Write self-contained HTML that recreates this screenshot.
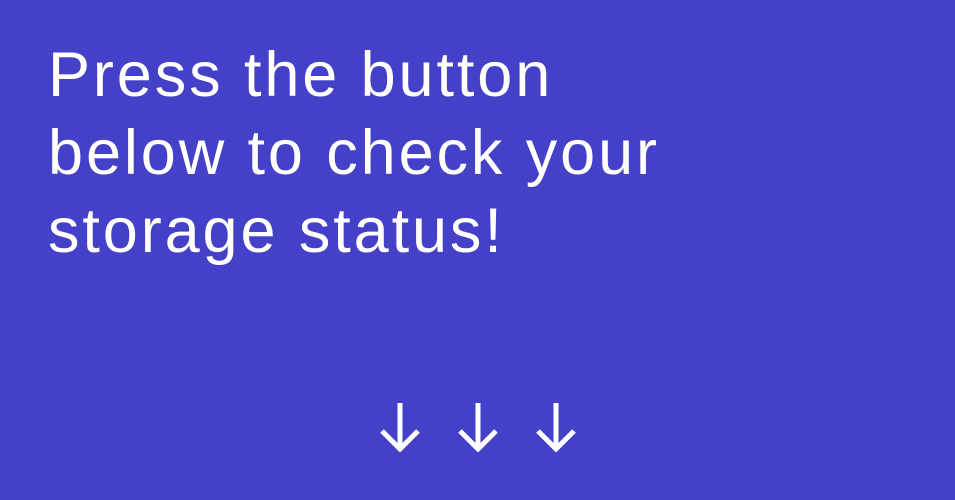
<!DOCTYPE html>
<html><head><style>
html,body{margin:0;padding:0;}
body{width:955px;height:500px;background:#4540c8;overflow:hidden;position:relative;font-family:"Liberation Sans",sans-serif;}
.t{position:absolute;left:48px;top:36px;color:#fff;font-size:63px;line-height:78px;letter-spacing:2.9px;white-space:nowrap;}
svg{position:absolute;top:400px;}
</style></head><body>
<div class="t">Press the button<br>below to check your<br>storage status!</div>
<svg style="left:378px" width="44" height="52" viewBox="0 0 44 52"><path d="M22 3V47M4 31L22 49L40 31" stroke="#fff" stroke-width="5" fill="none"/></svg>
<svg style="left:456px" width="44" height="52" viewBox="0 0 44 52"><path d="M22 3V47M4 31L22 49L40 31" stroke="#fff" stroke-width="5" fill="none"/></svg>
<svg style="left:534px" width="44" height="52" viewBox="0 0 44 52"><path d="M22 3V47M4 31L22 49L40 31" stroke="#fff" stroke-width="5" fill="none"/></svg>
</body></html>
